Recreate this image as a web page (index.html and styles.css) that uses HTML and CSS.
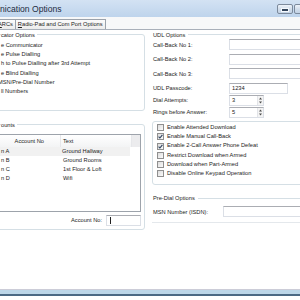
FILE: index.html
```html
<!DOCTYPE html>
<html lang="en">
<head>
    <meta charset="UTF-8">
    <meta name="viewport" content="width=device-width, initial-scale=1.0">
    <title>Communication Options</title>
    <link rel="stylesheet" href="styles.css">
</head>
<body>
    <div class="window">
        <div class="titlebar">
            <span class="title">nication Options</span>
            <div class="caption">
                <span class="cap-btn cap-min"><i></i></span>
                <span class="cap-btn cap-max"></span>
            </div>
        </div>
        <div class="tabstrip">
            <span class="tab tab-cut"><u>A</u>RCs</span>
            <span class="tab"><u>R</u>adio-Pad and Com Port Options</span>
        </div>
        <div class="panel">
            <div class="col-left">
                <div class="group group-comm">
                    <div class="group-title">cator Options</div>
                    <ul class="opt-list">
                        <li>e Communicator</li>
                        <li>e Pulse Dialling</li>
                        <li>h to Pulse Dialling after 3rd Attempt</li>
                        <li>e Blind Dialling</li>
                        <li class="cut">MSN/Pre-Dial Number</li>
                        <li>ll Numbers</li>
                    </ul>
                </div>
                <div class="group group-accounts">
                    <div class="group-title">ounts</div>
                    <div class="list">
                        <div class="list-head">
                            <span class="c1">Account No</span>
                            <span class="c2">Text</span>
                            <span class="c3"></span>
                        </div>
                        <div class="list-row selected"><span class="c1">n A</span><span class="c2">Ground Hallway</span></div>
                        <div class="list-row"><span class="c1">n B</span><span class="c2">Ground Rooms</span></div>
                        <div class="list-row"><span class="c1">n C</span><span class="c2">1st Floor &amp; Loft</span></div>
                        <div class="list-row"><span class="c1">n D</span><span class="c2">Wifi</span></div>
                    </div>
                    <div class="acc-field">
                        <label>Account No:</label>
                        <span class="input acc-input"><i class="caret"></i></span>
                    </div>
                </div>
            </div>

            <div class="col-right">
                <div class="section-title">UDL Options</div>
                <div class="field first"><label>Call-Back No 1:</label><span class="input wide"></span></div>
                <div class="field"><label>Call-Back No 2:</label><span class="input wide"></span></div>
                <div class="field"><label>Call-Back No 3:</label><span class="input wide"></span></div>
                <div class="field"><label>UDL Passcode:</label><span class="input pass">1234</span></div>
                <div class="field spin"><label>Dial Attempts:</label>
                    <span class="input spinner">3
                        <span class="spin-btns">
                            <svg width="5" height="9" viewBox="0 0 5 9"><path d="M1 3.5h3L2.5 1.5z M1 5.5h3L2.5 7.5z" fill="#4d4d4d"/></svg>
                        </span>
                    </span>
                </div>
                <div class="field spin"><label>Rings before Answer:</label>
                    <span class="input spinner">5
                        <span class="spin-btns">
                            <svg width="5" height="9" viewBox="0 0 5 9"><path d="M1 3.5h3L2.5 1.5z M1 5.5h3L2.5 7.5z" fill="#4d4d4d"/></svg>
                        </span>
                    </span>
                </div>

                <div class="check-box">
                    <div class="check-row"><span class="check"></span>Enable Attended Download</div>
                    <div class="check-row"><span class="check on"><svg width="5" height="5" viewBox="0 0 5 5"><path d="M0.6 2.6 L1.9 4 L4.4 0.8" fill="none" stroke="#2a3f5c" stroke-width="1.1"/></svg></span>Enable Manual Call-Back</div>
                    <div class="check-row"><span class="check on"><svg width="5" height="5" viewBox="0 0 5 5"><path d="M0.6 2.6 L1.9 4 L4.4 0.8" fill="none" stroke="#2a3f5c" stroke-width="1.1"/></svg></span>Enable 2-Call Answer Phone Defeat</div>
                    <div class="check-row"><span class="check"></span>Restrict Download when Armed</div>
                    <div class="check-row"><span class="check"></span>Download when Part-Armed</div>
                    <div class="check-row"><span class="check"></span>Disable Online Keypad Operation</div>
                </div>

                <div class="section-title predial">Pre-Dial Options</div>
                <div class="field msn"><label>MSN Number (ISDN):</label><span class="input wide"></span></div>
                <div class="section-end"></div>
            </div>
        </div>
        <div class="frame-bottom"></div>
    </div>
</body>
</html>
```

FILE: styles.css
```css
* {
    margin: 0;
    padding: 0;
    box-sizing: border-box;
}
body {
    width: 300px;
    height: 300px;
    overflow: hidden;
    background: #fff;
    font-family: "Liberation Sans", Arial, sans-serif;
    font-size: 5.7px;
    color: #1c1c1c;
}
.window {
    width: 340px;
    display: flex;
    flex-direction: column;
}

/* title bar */
.titlebar {
    height: 17px;
    display: flex;
    background: linear-gradient(#d3e2f3, #bed4ec);
}
.title {
    flex: 1;
    font-size: 8.6px;
    line-height: 18px;
    color: #1e2c42;
}
.caption {
    width: 63px;
    display: flex;
    gap: 1px;
    padding-top: 4px;
}
.cap-btn {
    height: 10px;
    border: 1px solid #7c8a9c;
    border-radius: 2px;
    background: linear-gradient(#eef3fa, #d2deec 50%, #c3d3e6);
    display: flex;
    align-items: center;
    justify-content: center;
}
.cap-min {
    width: 16px;
}
.cap-min i {
    width: 6px;
    height: 2px;
    margin-top: 2px;
    background: #33455c;
    box-shadow: 0 0 0 1px #f4f8fc;
}
.cap-max {
    width: 25px;
}

/* tabs */
.tabstrip {
    height: 13px;
    display: flex;
    align-items: flex-end;
    background: #f7f8f9;
    border-bottom: 1px solid #a9b0ba;
}
.tab {
    height: 10px;
    line-height: 9px;
    padding: 0 2px;
    border: 1px solid #9ba2ab;
    border-bottom: 0;
    margin-right: -1px;
    background: linear-gradient(#fbfbfb, #ececec);
    white-space: nowrap;
}
.tab-cut {
    margin-left: -6px;
    padding-left: 3px;
}
.tab u {
    text-decoration-thickness: 0.5px;
}

/* panel */
.panel {
    height: 260px;
    display: flex;
    gap: 7px;
    background: #fff;
    border-bottom: 1px solid #cccdd8;
}
.col-left {
    width: 145px;
    flex: none;
}
.col-right {
    flex: 1;
}
.frame-bottom {
    height: 6px;
    background: #bcd6e8;
    border-bottom: 2px solid #4b6984;
}

/* group boxes */
.group {
    margin-left: -6px;
    padding: 0 3px 0 6px;
    border: 1px solid #d5dfe5;
    border-radius: 3px;
}
.group-comm {
    margin-top: 4px;
    padding-bottom: 14px;
}
.group-accounts {
    margin-top: 13px;
    padding-bottom: 3px;
}
.group-title {
    display: inline-block;
    margin-top: -4.5px;
    padding-right: 2px;
    line-height: 8px;
    background: #fff;
    vertical-align: top;
}
.opt-list {
    list-style: none;
    line-height: 9.2px;
}
.opt-list li {
    white-space: nowrap;
}
.opt-list .cut {
    text-indent: -3px;
}

/* account list */
.list {
    margin-top: 2.5px;
    height: 78px;
    border: 1px solid #9da3ab;
    border-left: 0;
    margin-left: -6px;
}
.list-head,
.list-row {
    display: flex;
    padding-left: 6px;
}
.list-head {
    height: 12px;
    line-height: 12px;
    background: linear-gradient(#fff, #f3f4f5);
}
.list-row {
    line-height: 9px;
}
.list-row.selected {
    background: #f1f1f1;
    margin-right: 10px;
}
.c1 {
    width: 60px;
}
.c2 {
    width: 71px;
    padding-left: 2px;
}
.list-head .c1 {
    text-align: right;
    padding-right: 16px;
    border-right: 1px solid #e6e7ea;
}
.list-head .c2 {
    border-right: 1px solid #e6e7ea;
}
.list-head .c3 {
    flex: 1;
    background: #ececee;
}
.acc-field {
    display: flex;
    align-items: center;
    justify-content: flex-end;
    gap: 4px;
    margin-top: 3px;
}
.acc-input {
    width: 35px;
}
.caret {
    width: 1px;
    height: 7px;
    margin-left: 1px;
    background: #222;
}

/* inputs */
.input {
    height: 11px;
    display: flex;
    align-items: center;
    padding-left: 2px;
    border: 1px solid #dbdfe6;
    border-top-color: #abadb3;
    background: #fff;
}
.wide {
    width: 100%;
}
.pass {
    width: 59px;
}
.spinner {
    width: 35px;
    justify-content: space-between;
    padding-right: 0;
}
.spin-btns {
    width: 6px;
    height: 9px;
    display: flex;
    align-items: center;
    justify-content: center;
    border-left: 1px solid #e2e4e8;
    background: #f3f3f3;
}

/* right column */
.section-title {
    display: flex;
    align-items: center;
    gap: 3px;
    line-height: 8px;
    margin-top: 0.5px;
    padding-left: 1px;
}
.section-title::after {
    content: "";
    flex: 1;
    border-top: 1px solid #d5dfe5;
}
.section-title.predial {
    margin-top: 9px;
}
.field {
    display: grid;
    grid-template-columns: 76px 1fr;
    align-items: center;
    height: 11px;
    margin-top: 3.5px;
    padding-left: 1px;
}
.field.first {
    margin-top: 0.5px;
}
.field.spin {
    margin-top: 1px;
}
.field.msn {
    grid-template-columns: 70px 1fr;
    margin-top: 4px;
}
.check-box {
    margin-top: 3px;
    padding: 1.5px 0 6px 4px;
    border: 1px solid #d5dfe5;
    border-radius: 3px;
    line-height: 9.2px;
}
.check-row {
    display: flex;
    align-items: center;
    gap: 3px;
    white-space: nowrap;
}
.check {
    width: 7px;
    height: 7px;
    display: flex;
    align-items: center;
    justify-content: center;
    border: 1px solid #8f8f8f;
    background: linear-gradient(135deg, #dcdcdc, #fbfbfb);
}
.section-end {
    margin-top: 4.5px;
    border-top: 1px solid #e4e8ec;
}
```
